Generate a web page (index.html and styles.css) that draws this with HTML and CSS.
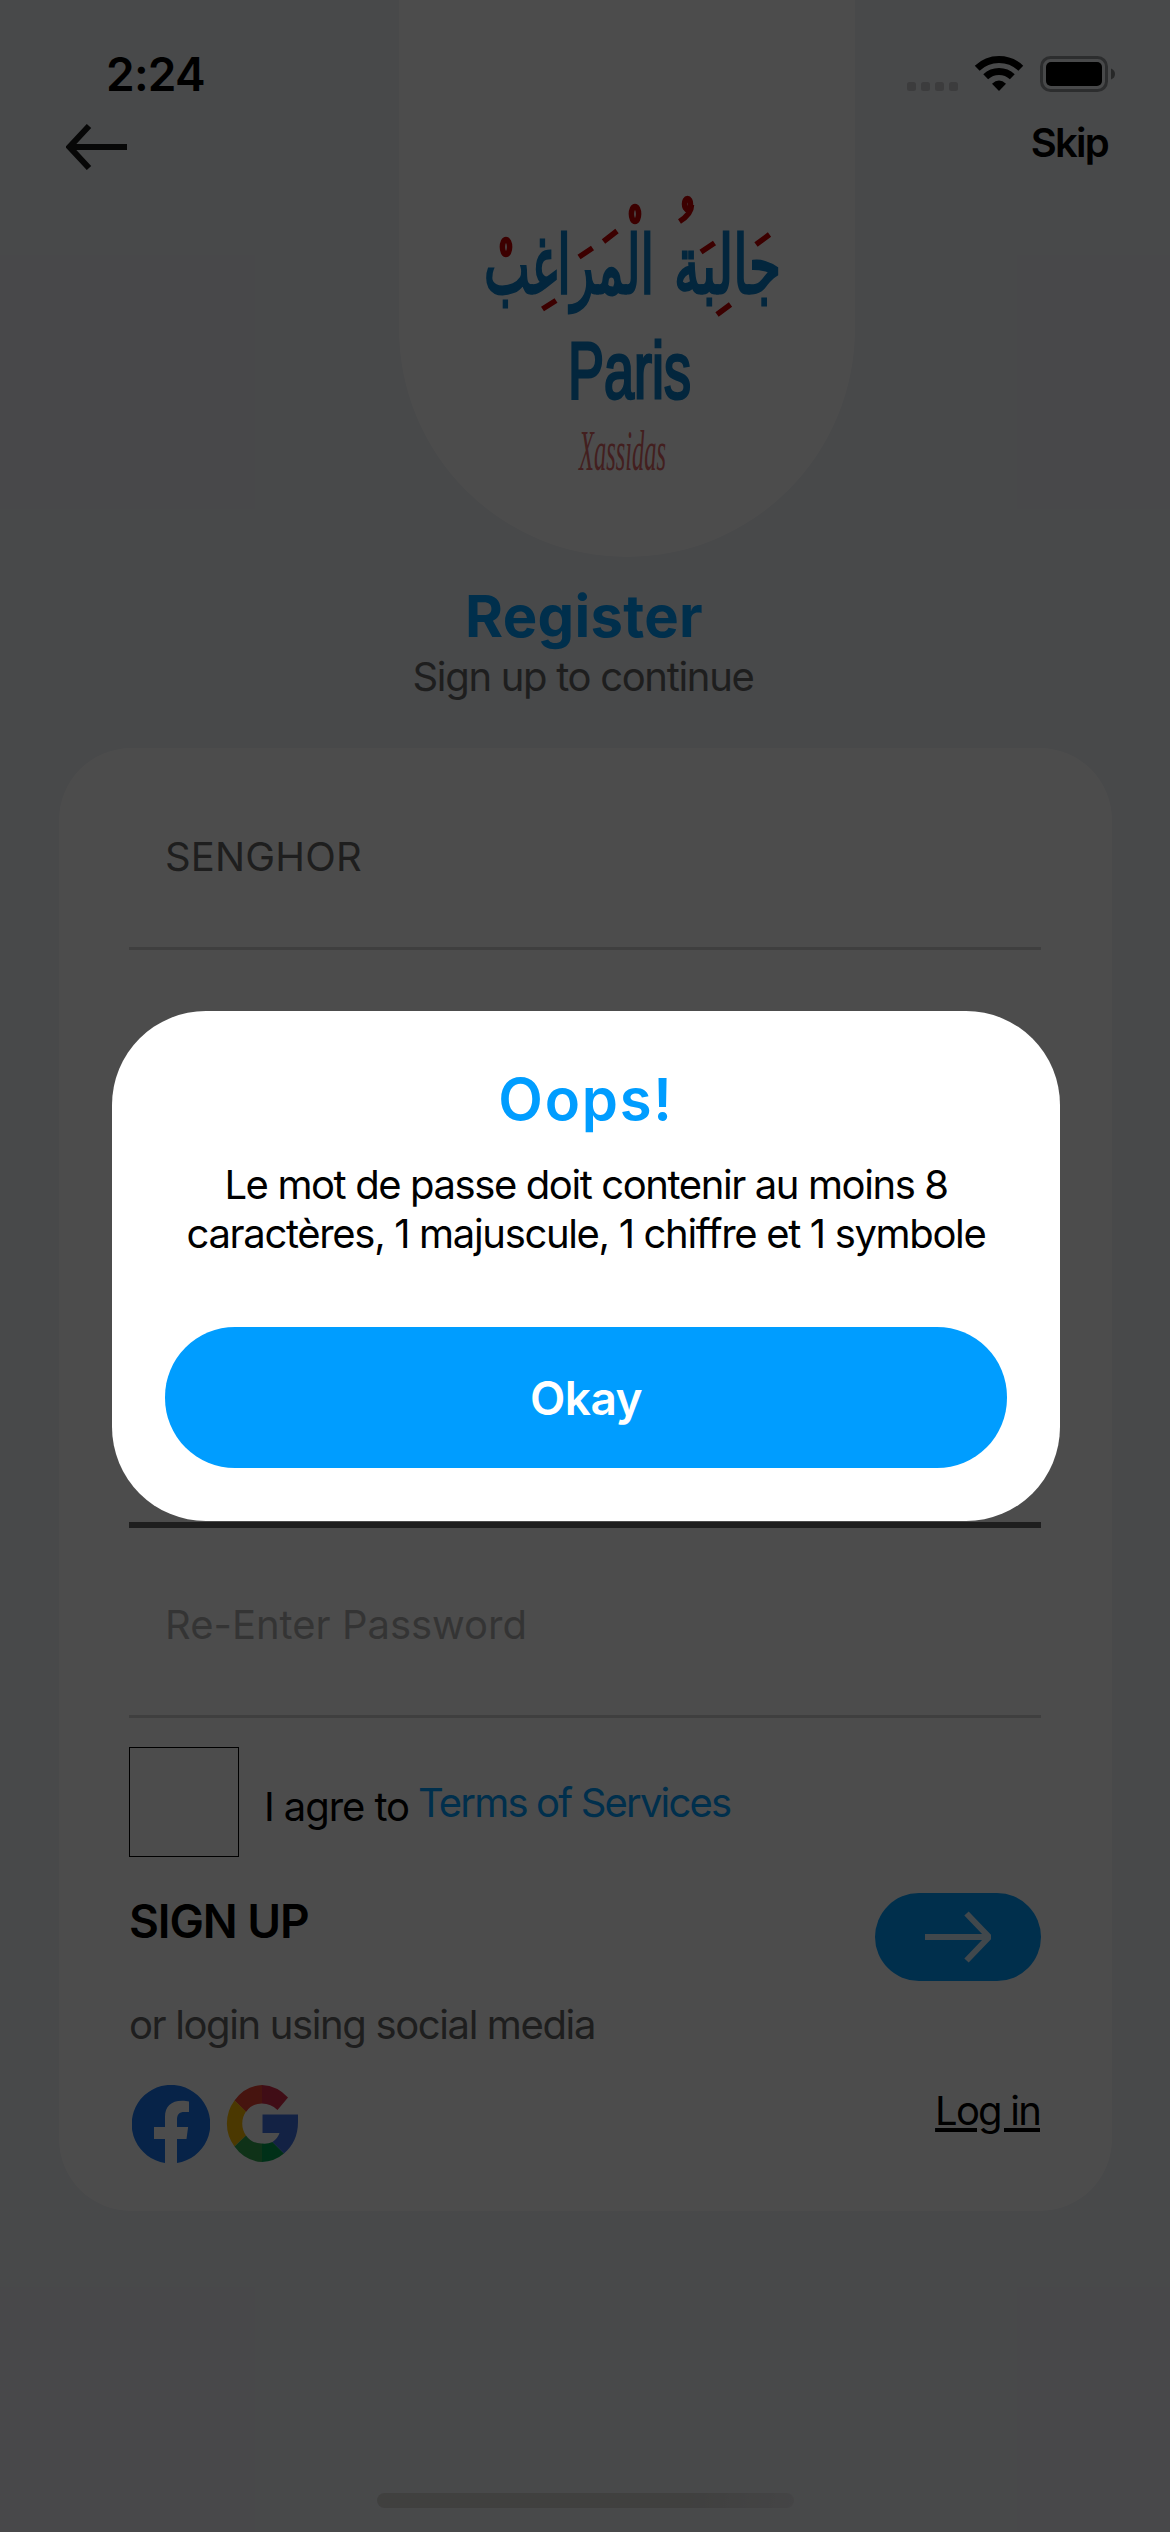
FILE: index.html
```html
<!DOCTYPE html>
<html lang="fr">
<head>
<meta charset="utf-8">
<title>Register</title>
<link rel="stylesheet" href="styles.css">
</head>
<body>
<div class="screen">
  <header class="header">
    <div class="header-left">
      <div class="clock">2:24</div>
      <svg class="back" width="62" height="46" viewBox="0 0 62 46"><path d="M23 2L3.500 23 23 44M3 23h58" fill="none" stroke="#000" stroke-opacity=".9" stroke-width="6"/></svg>
    </div>
    <div class="logo-tab">
      <svg class="logo" width="456" height="557" viewBox="399 0 456 557">
        <g class="arabic">
          <text transform="translate(781 293) scale(1 1.75)" textLength="107" lengthAdjust="spacingAndGlyphs" direction="rtl">جالبة</text>
          <text transform="translate(654 293) scale(1 1.75)" textLength="170" lengthAdjust="spacingAndGlyphs" direction="rtl">المراغب</text>
        </g>
        <g fill="none" stroke="#c80000" stroke-width="5.500">
          <ellipse cx="506" cy="247" rx="3.6" ry="7.5"/>
          <ellipse cx="635" cy="214" rx="3.6" ry="7.5"/>
          <ellipse cx="687.5" cy="204" rx="3" ry="5.5"/>
          <path d="M691.500 205q0 9-12 16.500M542.500 309l13.500-8.500M579 257l13.500-9M603.500 241.500l13.500-10.500M701 252l13.500-9M756 244.500l13.500-10M717 314.500l13.500-10"/>
        </g>
        <text class="city" x="568" y="398" textLength="123" lengthAdjust="spacingAndGlyphs">Paris</text>
        <text class="tagline" x="579" y="470" textLength="87" lengthAdjust="spacingAndGlyphs">Xassidas</text>
      </svg>
    </div>
    <div class="header-right">
      <svg class="status" width="210" height="40" viewBox="906 54 210 40">
        <g class="signal"><rect x="907" y="82" width="9" height="9" rx="2.500"/><rect x="921" y="82" width="9" height="9" rx="2.500"/><rect x="935" y="82" width="9" height="9" rx="2.500"/><rect x="949" y="82" width="9" height="9" rx="2.500"/></g>
        <g fill="none" stroke="#000" stroke-width="7"><path d="M977.200 68.200a31.500 31.500 0 0 1 43.600 0M985.700 76.700a19.300 19.300 0 0 1 26.600 0"/></g>
        <path d="M999 91l-7-7.200q7-6.600 14 0z"/>
        <rect x="1041.500" y="57.500" width="65" height="33" rx="9" fill="none" stroke="#000" stroke-opacity=".38" stroke-width="3"/>
        <rect x="1046" y="62" width="56" height="24" rx="5"/>
        <path d="M1111 68.500q4 1.500 4 5.500t-4 5.500z" opacity=".45"/>
      </svg>
      <a class="skip">Skip</a>
    </div>
  </header>

  <h1 class="title">Register</h1>
  <p class="subtitle">Sign up to continue</p>

  <main class="card">
    <div class="field field-first">SENGHOR</div>
    <div class="field"></div>
    <div class="field"></div>
    <div class="field field-focus"></div>
    <div class="field field-last placeholder">Re-Enter Password</div>
    <div class="terms">
      <span class="checkbox"></span>
      <span class="agree">I agre to</span>
      <a class="terms-link">Terms of Services</a>
    </div>
    <div class="submit-row">
      <span class="signup">SIGN UP</span>
      <span class="pill"><svg width="66" height="52" viewBox="0 0 66 52"><path d="M0 26h63M41.500 2.500L64 26 41.500 49.500" fill="none" stroke="#fff" stroke-opacity=".85" stroke-width="6"/></svg></span>
    </div>
    <p class="social-label">or login using social media</p>
    <div class="social-row">
      <svg class="facebook" width="78" height="78" viewBox="0 0 78 78"><path fill="#1877f2" d="M33 78A39.300 39.300 0 1 1 45 78V54h9.500l1.600-12H45v-7c0-5.500 2-8 7.500-8H57V16.500c-2-.500-4-.800-7-.800C39 15.700 33 21.500 33 32v10H22v12h11z"/></svg>
      <svg class="google" width="72" height="77" viewBox="0 0 72 77">
        <path fill="#ea4335" d="M8.500 15.500A36.500 38.500 0 0 1 36 0v18.500a19 19 0 0 0-16 8.500z"/>
        <path fill="#d62d4b" d="M36 0a38 38 0 0 1 26 12.500L51.500 25A22 22 0 0 0 36 18.500z"/>
        <path fill="#fbbc04" d="M8.500 15.500a38.500 38.500 0 0 0 0 46L20 50.500a21 21 0 0 1 0-24z"/>
        <path fill="#34a853" d="M8.500 61.500A37 37 0 0 0 36 77V58.500a19 19 0 0 1-16-8z"/>
        <path fill="#00a050" d="M36 77a36 36 0 0 0 22-8.500L46.500 57A20 20 0 0 1 36 58.500z"/>
        <path fill="#4274e3" d="M36.500 29.500H72V37c0 13.500-5 24-14 31.500L46.500 57q5.500-4 7-9h-17z"/>
      </svg>
      <a class="login">Log in</a>
    </div>
  </main>
  <div class="home-bar"></div>

  <div class="overlay">
    <section class="dialog">
      <h2 class="dialog-title">Oops!</h2>
      <p class="message"><span class="line-one">Le mot de passe doit contenir au moins 8</span><br><span class="line-two">caractères, 1 majuscule, 1 chiffre et 1 symbole</span></p>
      <button class="okay">Okay</button>
    </section>
  </div>
</div>
</body>
</html>
```
FILE: styles.css
```css
* { box-sizing: border-box; margin: 0; padding: 0; }
body { width: 1170px; height: 2532px; overflow: hidden; }
svg { display: block; flex: none; }

.screen {
  position: relative;
  display: flex;
  flex-direction: column;
  width: 1170px;
  height: 2532px;
  background: #f0f3f7;
  color: #000;
  font: 400 40px/48px Inter, sans-serif;
  white-space: nowrap;
}

.header { display: grid; grid-template-columns: 399px 456px 1fr; height: 557px; }
.header-left { padding: 46px 0 0 66px; }
.clock { font-size: 46px; line-height: 56px; font-weight: 600; letter-spacing: -0.76px; padding-left: 40px; }
.back { margin-top: 22px; }
.logo-tab { background: #fff; border-radius: 0 0 228px 228px; overflow: hidden; }
.arabic { font: 400 46px "DejaVu Sans", "Noto Sans", sans-serif; fill: #0a80cc; stroke: #0a80cc; stroke-width: 1.7px; }
.city { font: 400 80px "Liberation Sans", sans-serif; fill: #0a80cc; stroke: #0a80cc; stroke-width: 3px; }
.tagline { font: italic 400 58px "Liberation Serif", serif; fill: #e06a6a; }
.header-right { display: flex; flex-direction: column; padding: 54px 54px 0 51px; }
.signal { fill: #c8c8cc; }
.skip { align-self: flex-end; margin: 25px 8px 0 0; font-weight: 600; letter-spacing: -1.75px; }

.title { margin: 24px 2px 0 0; text-align: center; font-size: 58px; line-height: 70px; font-weight: 700; letter-spacing: 0.28px; color: #009dff; }
.subtitle { margin: 2px 4px 0 0; text-align: center; letter-spacing: -1.31px; color: #676767; }

.card { width: 1053px; height: 1463px; margin: 47px 0 0 59px; padding: 0 71px 0 70px; background: #fff; border-radius: 72px; }
.field { display: flex; align-items: flex-end; height: 193px; padding: 0 0 66px 36px; border-bottom: 3px solid #d2d2d2; color: #676767; }
.field-first { height: 202px; letter-spacing: 0.17px; }
.field-focus { height: 192px; border-bottom: 6px solid #676767; }
.field-last { height: 190px; }
.placeholder { color: #b0b0b0; }

.terms { display: flex; height: 110px; margin-top: 29px; }
.checkbox { width: 110px; height: 110px; border: 1.500px solid #000; }
.agree { margin: 36px 0 0 25px; letter-spacing: -1.08px; }
.terms-link { margin: 32px 0 0 9px; letter-spacing: -1.82px; color: #009dff; }

.submit-row { display: flex; justify-content: space-between; height: 88px; margin-top: 36px; }
.signup { font-size: 46px; line-height: 56px; font-weight: 600; letter-spacing: -1.08px; }
.pill { display: flex; align-items: center; justify-content: center; width: 166px; height: 88px; border-radius: 44px; background: #009dff; }
.social-label { margin-top: 20px; letter-spacing: -1.37px; color: #676767; }
.social-row { display: flex; margin: 36px 0 0 3px; }
.google { margin-left: 16px; }
.login { margin: 2px 1px 0 auto; letter-spacing: -1.8px; text-decoration: underline; text-decoration-thickness: 4px; text-underline-offset: 3px; }

.home-bar { width: 417px; height: 15px; margin: 282px 0 0 377px; border-radius: 8px; background: linear-gradient(100deg, #d6d6d4 75%, #e6e6ea); }

.overlay { position: absolute; inset: 0; display: flex; justify-content: center; align-items: flex-start; padding: 1011px 0 0 2px; background: rgba(0, 0, 0, 0.7); }
.dialog { width: 948px; height: 510px; padding: 53px; border-radius: 94px; background: #fff; text-align: center; }
.dialog-title { font-size: 58px; line-height: 70px; font-weight: 600; letter-spacing: 1.76px; color: #009dff; }
.message { margin-top: 26px; line-height: 49px; }
.line-one { letter-spacing: -1.4px; }
.line-two { letter-spacing: -1.33px; }
.okay { display: block; width: 842px; height: 141px; margin-top: 69px; border: 0; border-radius: 70px; background: #009dff; color: #fff; font: 600 46px/56px Inter, sans-serif; letter-spacing: -0.56px; }
```
